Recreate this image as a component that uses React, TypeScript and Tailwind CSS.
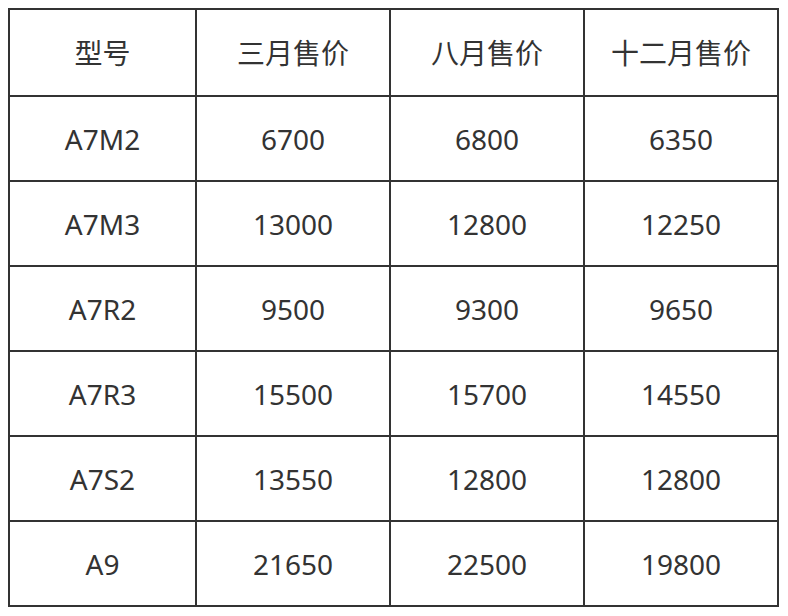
import React from "react";

const header = ["型号", "三月售价", "八月售价", "十二月售价"];
const rows = [
  ["A7M2", "6700", "6800", "6350"],
  ["A7M3", "13000", "12800", "12250"],
  ["A7R2", "9500", "9300", "9650"],
  ["A7R3", "15500", "15700", "14550"],
  ["A7S2", "13550", "12800", "12800"],
  ["A9", "21650", "22500", "19800"],
];

export default function App() {
  return (
    <div className="w-[788px] h-[616px] bg-white pt-[8px] pl-[8px]">
      <table
        className="border-collapse text-[#333] text-[28px] leading-none"
        style={{ fontFamily: '"Noto Sans", "Noto Sans CJK SC", sans-serif' }}
      >
        <colgroup>
          <col className="w-[187px]" />
          <col className="w-[194px]" />
          <col className="w-[194px]" />
          <col className="w-[194px]" />
        </colgroup>
        <tbody>
          <tr className="h-[87px]">
            {header.map((h) => (
              <td key={h} className="border-2 border-[#333] text-center align-middle p-0">
                {h}
              </td>
            ))}
          </tr>
          {rows.map((r, i) => (
            <tr key={i} className="h-[85px]">
              {r.map((c, j) => (
                <td key={j} className="border-2 border-[#333] text-center align-middle p-0">
                  {c}
                </td>
              ))}
            </tr>
          ))}
        </tbody>
      </table>
    </div>
  );
}
